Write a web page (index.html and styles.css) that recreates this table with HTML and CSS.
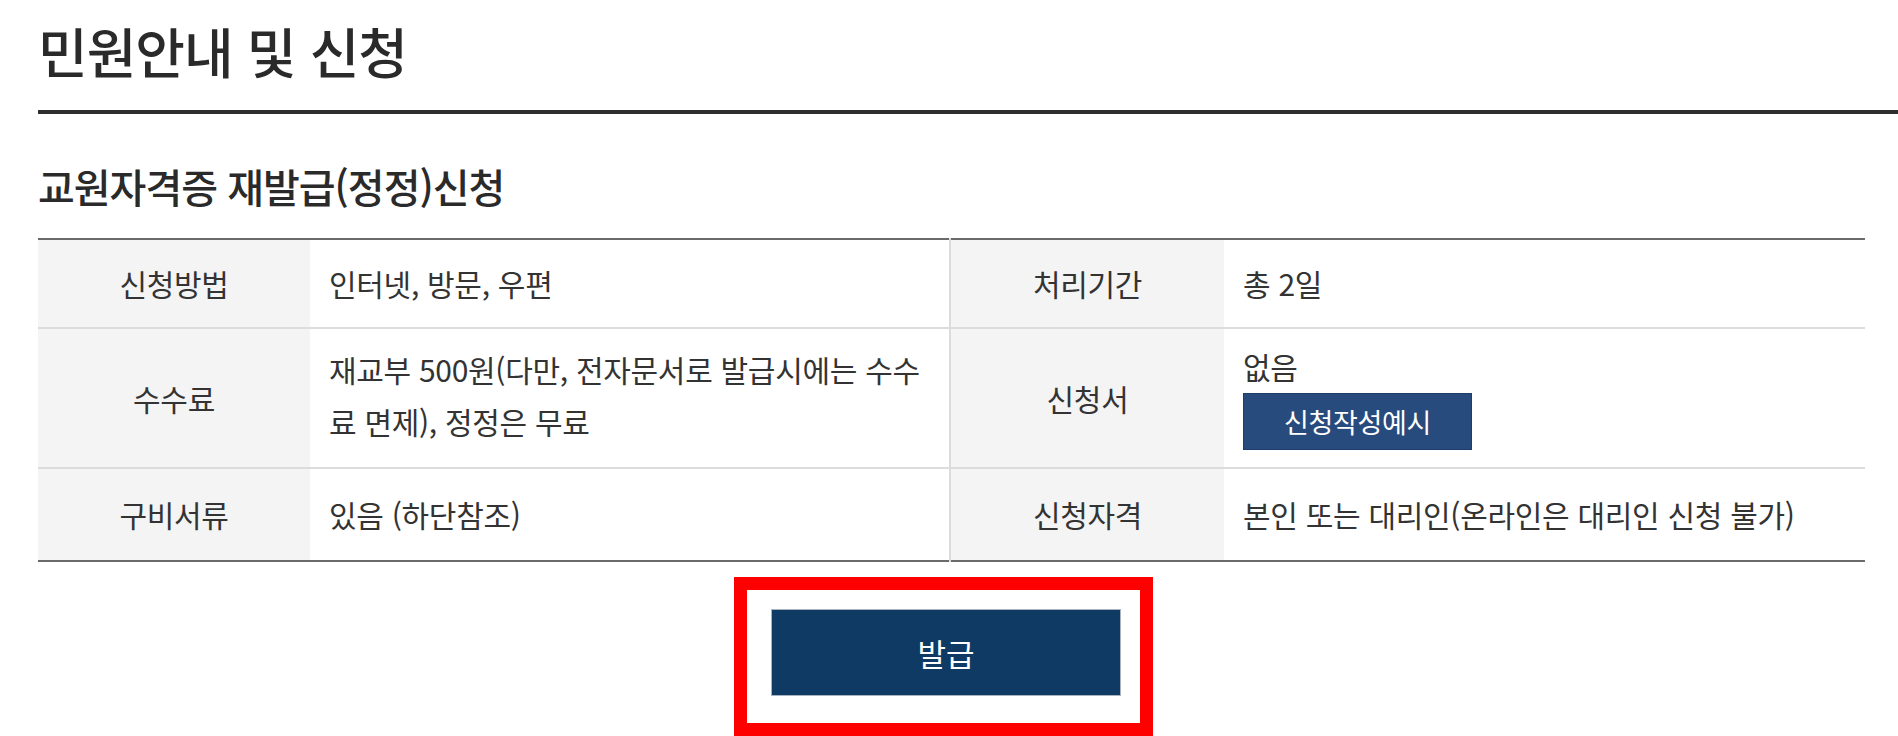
FILE: index.html
```html
<!DOCTYPE html>
<html lang="ko">
<head>
  <meta charset="UTF-8">
  <title>민원안내 및 신청</title>
  <link rel="stylesheet" href="styles.css">
</head>
<body>

<div class="page">
  <div class="page-head">
    <h1>민원안내 및 신청</h1>
  </div>

  <div class="content">
    <h2>교원자격증 재발급(정정)신청</h2>

    <table class="info-table">
      <colgroup>
        <col class="col-th">
        <col class="col-td">
        <col class="col-th2">
        <col class="col-td2">
      </colgroup>
      <tr class="row-1">
        <th>신청방법</th>
        <td>인터넷, 방문, 우편</td>
        <th class="th-right">처리기간</th>
        <td>총 2일</td>
      </tr>
      <tr class="row-2">
        <th>수수료</th>
        <td>재교부 500원(다만, 전자문서로 발급시에는 수수료 면제), 정정은 무료</td>
        <th class="th-right">신청서</th>
        <td>
          <div>없음</div>
          <a href="#" class="btn-sample">신청작성예시</a>
        </td>
      </tr>
      <tr class="row-3">
        <th>구비서류</th>
        <td>있음 (하단참조)</td>
        <th class="th-right">신청자격</th>
        <td>본인 또는 대리인(온라인은 대리인 신청 불가)</td>
      </tr>
    </table>

    <div class="issue-area">
      <div class="highlight">
        <button class="btn-issue">발급</button>
      </div>
    </div>
  </div>
</div>

</body>
</html>
```

FILE: styles.css
```css
* {
  margin: 0;
  padding: 0;
  box-sizing: border-box;
}

body {
  font-family: "Noto Sans CJK KR", "Noto Sans", sans-serif;
  color: #333;
  background: #fff;
  overflow: hidden;
}

.page {
  padding-left: 38px;
}

/* Page title */
.page-head {
  padding-top: 12px;
  padding-bottom: 20px;
  border-bottom: 4px solid #2e2e2e;
}

.page-head h1 {
  font-size: 54px;
  font-weight: 500;
  line-height: 78px;
  color: #2a2a2a;
  letter-spacing: -1px;
}

.content {
  width: 1827px;
}

.content h2 {
  font-size: 40px;
  font-weight: 500;
  line-height: 56px;
  color: #2a2a2a;
  letter-spacing: -1px;
  margin-top: 44px;
  margin-bottom: 24px;
}

/* Info table */
.info-table {
  width: 100%;
  border-collapse: collapse;
  table-layout: fixed;
  border-top: 2px solid #6b6b6b;
  border-bottom: 2px solid #6b6b6b;
  font-size: 30px;
  letter-spacing: -0.3px;
  line-height: 1.75;
}

.col-th { width: 272px; }
.col-td { width: 640px; }
.col-th2 { width: 274px; }

.info-table tr + tr th,
.info-table tr + tr td {
  border-top: 2px solid #dcdcdc;
}

.info-table th {
  background: #f4f4f4;
  font-weight: 400;
  text-align: center;
  color: #333;
}

.info-table td {
  text-align: left;
  padding: 0 18px 0 19px;
  vertical-align: middle;
}

.info-table .th-right {
  border-left: 2px solid #dcdcdc;
}

.row-1 { height: 89px; }
.row-2 { height: 140px; }
.row-3 { height: 93px; }

.row-2 td {
  padding-top: 2px;
  padding-bottom: 8px;
}

.btn-sample {
  display: inline-block;
  width: 229px;
  height: 57px;
  line-height: 55px;
  text-align: center;
  background: #284b7e;
  border: 1px solid #1d3d6b;
  color: #fff;
  font-size: 27px;
  text-decoration: none;
}

/* Issue button */
.issue-area {
  display: flex;
  justify-content: center;
  padding-right: 16px;
  margin-top: 15px;
}

.highlight {
  border: 13px solid #ff0000;
  padding: 19px 19px 27px 24px;
}

.btn-issue {
  display: block;
  width: 350px;
  height: 87px;
  background: #0f3a63;
  border: 1px solid #a9b3bf;
  color: #fff;
  font-family: inherit;
  font-size: 31px;
  cursor: pointer;
}
```
